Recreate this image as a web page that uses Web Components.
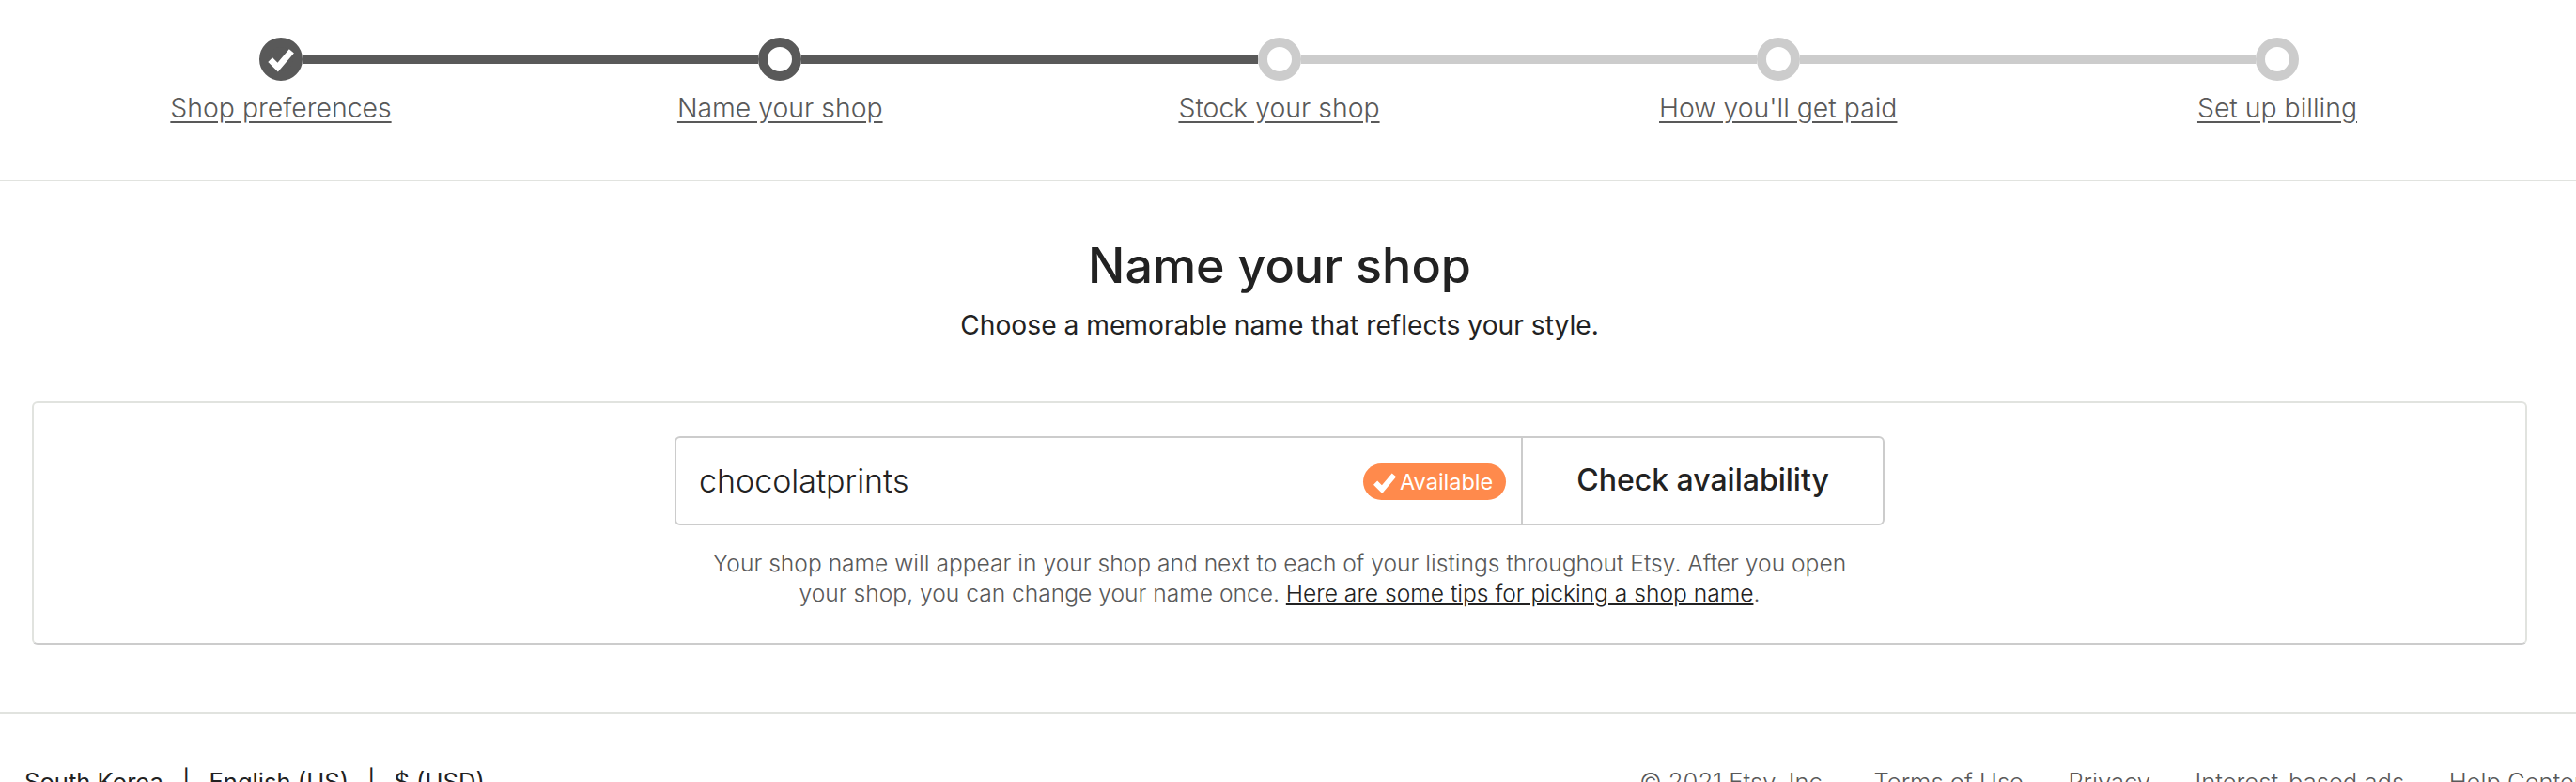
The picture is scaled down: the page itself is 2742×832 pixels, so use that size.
<!DOCTYPE html>
<html lang="en">
<head>
<meta charset="utf-8">
<title>Name your shop</title>
<style>
html, body { margin: 0; padding: 0; background: #fff; overflow: hidden; height: 832px; }
body { font-family: Inter, "Liberation Sans", sans-serif; color: #222; }
</style>
</head>
<body>
<shop-stepper>
    <step-item state="done">Shop preferences</step-item>
    <step-item state="current">Name your shop</step-item>
    <step-item state="next">Stock your shop</step-item>
    <step-item state="todo">How you'll get paid</step-item>
    <step-item state="last">Set up billing</step-item>
</shop-stepper>
<page-title heading="Name your shop">Choose a memorable name that reflects your style.</page-title>
<name-card>
    <name-field value="chocolatprints" button="Check availability"></name-field>
    <span slot="help">Your shop name will appear in your shop and next to each of your listings throughout Etsy. After you open<br>your shop, you can change your name once. <a href="#" style="color:#222">Here are some tips for picking a shop name</a>.</span>
</name-card>
<site-footer></site-footer>

<script>
const CHECK = `<svg viewBox="0 0 24 24" fill="none" stroke="currentColor" stroke-width="5"><path d="M3.5 12.5 9.5 18.5 20.5 5.5"/></svg>`;

class ShopStepper extends HTMLElement {
    constructor() {
        super();
        this.attachShadow({mode: "open"}).innerHTML = `
            <style>
            :host {
                display: grid;
                grid-template-columns: repeat(5, 531.25px);
                justify-content: center;
                box-sizing: border-box;
                width: 2742px;
                height: 193px;
                padding: 40px 19px 0 0;
                border-bottom: 2px solid #e1e3df;
            }
            </style>
            <slot></slot>`;
    }
}
customElements.define("shop-stepper", ShopStepper);

class StepItem extends HTMLElement {
    constructor() {
        super();
        const state = this.getAttribute("state");
        const dark = "#595959", grey = "#cccccc";
        const left = state === "done" ? "transparent" : (state === "current" || state === "next") ? dark : grey;
        const right = state === "last" ? "transparent" : (state === "done" || state === "current") ? dark : grey;
        const ringColor = (state === "done" || state === "current") ? dark : grey;
        this.attachShadow({mode: "open"}).innerHTML = `
            <style>
            * { box-sizing: border-box; }
            :host { display: block; }
            .track { display: flex; align-items: center; height: 46px; }
            .line { flex: 1; height: 10px; }
            .left { background: ${left}; }
            .right { background: ${right}; }
            .dot {
                width: 46px;
                height: 46px;
                border-radius: 50%;
                border: 10px solid ${ringColor};
                background: ${state === "done" ? dark : "#fff"};
                color: #fff;
                display: flex;
                align-items: center;
                justify-content: center;
                flex: none;
            }
            .dot svg { width: 32px; height: 32px; flex: none; }
            .label {
                margin-top: 10px;
                text-align: center;
                font-size: 28.4px;
                line-height: 38px;
                font-weight: 300;
                color: #595959;
            }
            a { color: inherit; text-underline-offset: 4px; }
            </style>
            <div class="track">
                <div class="line left"></div>
                <div class="dot">${state === "done" ? CHECK : ""}</div>
                <div class="line right"></div>
            </div>
            <div class="label"><a href="#"><slot></slot></a></div>`;
    }
}
customElements.define("step-item", StepItem);

class PageTitle extends HTMLElement {
    constructor() {
        super();
        this.attachShadow({mode: "open"}).innerHTML = `
            <style>
            :host {
                display: block;
                width: 2724px;
                text-align: center;
                padding-top: 58px;
                height: 234px;
                box-sizing: border-box;
            }
            h1 {
                margin: 0;
                font-size: 52px;
                line-height: 64px;
                font-weight: 500;
                color: #222;
            }
            p {
                margin: 11px 0 0;
                font-size: 28.2px;
                line-height: 40px;
                font-weight: 400;
                color: #222;
            }
            </style>
            <h1>${this.getAttribute("heading")}</h1>
            <p><slot></slot></p>`;
    }
}
customElements.define("page-title", PageTitle);

class NameCard extends HTMLElement {
    constructor() {
        super();
        this.attachShadow({mode: "open"}).innerHTML = `
            <style>
            * { box-sizing: border-box; }
            :host {
                display: flex;
                flex-direction: column;
                align-items: center;
                box-sizing: border-box;
                width: 2656px;
                height: 259px;
                margin-left: 34px;
                padding-top: 35px;
                border: 2px solid #e1e3df;
                border-bottom-color: #cccccc;
                border-radius: 6px;
            }
            .help {
                margin-top: 24px;
                text-align: center;
                font-size: 24.6px;
                line-height: 32px;
                font-weight: 300;
                color: #595959;
            }
            </style>
            <slot></slot>
            <div class="help"><slot name="help"></slot></div>`;
    }
}
customElements.define("name-card", NameCard);

class NameField extends HTMLElement {
    constructor() {
        super();
        this.attachShadow({mode: "open"}).innerHTML = `
            <style>
            * { box-sizing: border-box; }
            :host {
                display: flex;
                box-sizing: border-box;
                width: 1288px;
                height: 95px;
                border: 2px solid #cccccc;
                border-radius: 6px;
                background: #fff;
            }
            .input {
                flex: 1;
                display: flex;
                align-items: center;
                justify-content: space-between;
                padding: 0 16px 0 24px;
                font-size: 34px;
                font-weight: 300;
                color: #222;
            }
            .button {
                width: 385px;
                border-left: 2px solid #cccccc;
                display: flex;
                align-items: center;
                justify-content: center;
                font-size: 32px;
                font-weight: 500;
                color: #222;
                padding-bottom: 2px;
            }
            avail-pill { margin-top: 2px; }
            </style>
            <div class="input"><span>${this.getAttribute("value")}</span><avail-pill>Available</avail-pill></div>
            <div class="button">${this.getAttribute("button")}</div>`;
    }
}
customElements.define("name-field", NameField);

class AvailPill extends HTMLElement {
    constructor() {
        super();
        this.attachShadow({mode: "open"}).innerHTML = `
            <style>
            :host {
                display: flex;
                align-items: center;
                gap: 2px;
                height: 39px;
                width: 152px;
                box-sizing: border-box;
                padding-left: 9px;
                border-radius: 20px;
                background: #ff8a4c;
                color: #fff;
                font-size: 23.5px;
                font-weight: 400;
            }
            svg { width: 28px; height: 28px; flex: none; }
            </style>
            ${CHECK}<slot></slot>`;
    }
}
customElements.define("avail-pill", AvailPill);

class SiteFooter extends HTMLElement {
    constructor() {
        super();
        this.attachShadow({mode: "open"}).innerHTML = `
            <style>
            * { box-sizing: border-box; }
            :host {
                display: flex;
                justify-content: space-between;
                box-sizing: border-box;
                width: 2790px;
                margin-top: 72px;
                padding: 55px 0 0 26px;
                border-top: 2px solid #e1e3df;
                font-size: 25.6px;
                line-height: 34px;
                white-space: nowrap;
            }
            .left { display: flex; gap: 20px; color: #222; font-weight: 400; }
            .right { display: flex; gap: 47.5px; color: #595959; font-weight: 300; margin-right: 41px; }
            </style>
            <div class="left"><span>South Korea</span><span>|</span><span>English (US)</span><span>|</span><span>$ (USD)</span></div>
            <div class="right"><span>© 2021 Etsy, Inc.</span><span>Terms of Use</span><span>Privacy</span><span>Interest-based ads</span><span>Help Center</span></div>`;
    }
}
customElements.define("site-footer", SiteFooter);
</script>
</body>
</html>
